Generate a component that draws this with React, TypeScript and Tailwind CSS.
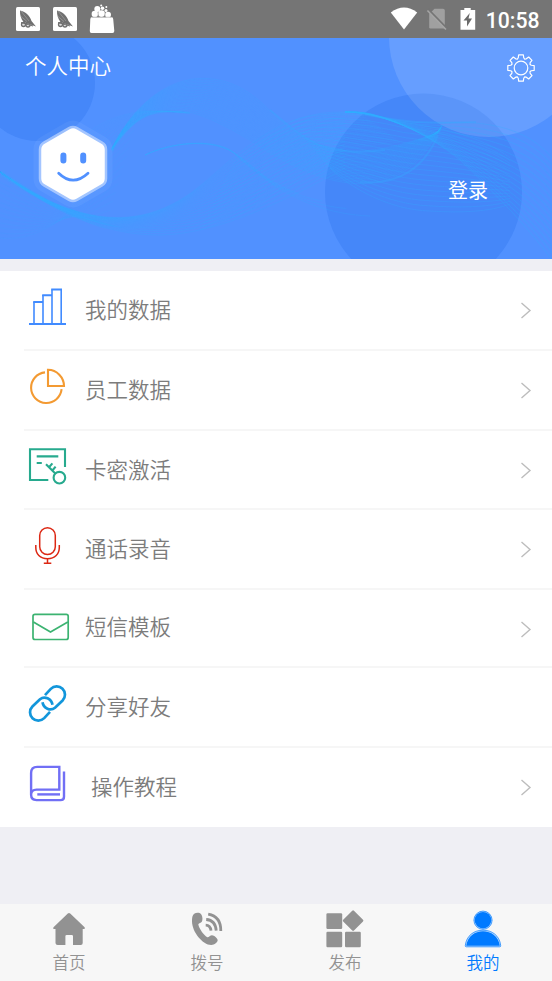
import type { ReactNode } from "react"

type MenuItem = {
    label: string
    icon: ReactNode
    row: string
    textClass?: string
    arrow?: boolean
}

type TabItem = {
    label: string
    icon: ReactNode
    active?: boolean
}

const waves = [
    {
        from: [0, 134, 60, 175, 130, 205, 200, 148, 240, 115, 280, 72, 345, 74],
        to: [0, 134, 50, 172, 100, 197, 160, 197, 220, 196, 290, 160, 345, 130],
        count: 20,
        opacity: 0.2,
    },
    {
        from: [0, 134, 30, 150, 50, 166, 75, 178, 85, 183, 95, 188, 105, 190],
        to: [0, 200, 20, 202, 40, 196, 60, 182, 80, 165, 90, 120, 140, 74],
        count: 14,
        opacity: 0.1,
    },
    {
        from: [112, 110, 150, 35, 215, 20, 265, 68, 310, 112, 340, 130, 440, 94],
        to: [112, 112, 150, 50, 195, 70, 250, 102, 320, 150, 400, 175, 442, 87],
        count: 22,
        opacity: 0.2,
    },
    {
        from: [80, 100, 100, 85, 120, 74, 150, 73, 160, 73, 170, 73, 180, 74],
        to: [112, 112, 120, 95, 140, 78, 160, 74, 170, 73, 180, 74, 190, 75],
        count: 10,
        opacity: 0.1,
    },
    {
        from: [145, 117, 170, 105, 215, 98, 240, 119, 250, 126, 262, 136, 275, 148],
        to: [145, 117, 170, 105, 210, 100, 230, 112, 245, 124, 290, 175, 370, 178],
        count: 5,
        opacity: 0.18,
    },
    {
        from: [345, 74, 380, 72, 380, 86, 440, 85, 460, 84, 520, 80, 552, 120],
        to: [345, 74, 380, 75, 420, 90, 460, 122, 500, 160, 530, 192, 552, 222],
        count: 16,
        opacity: 0.28,
    },
    {
        from: [290, 84, 320, 72, 360, 74, 400, 84, 430, 88, 480, 96, 510, 120],
        to: [330, 130, 350, 150, 390, 172, 430, 173, 460, 175, 490, 174, 510, 166],
        count: 18,
        opacity: 0.25,
    },
    {
        from: [235, 122, 265, 100, 290, 84, 330, 76, 340, 74, 350, 74, 360, 75],
        to: [200, 192, 250, 176, 290, 150, 330, 118, 350, 108, 370, 108, 400, 104],
        count: 20,
        opacity: 0.14,
    },
]

const ridges = [
    "M112 113C135 74 155 70 190 75",
    "M270 72C310 106 325 119 385 112",
    "M355 74C400 84 420 86 476 84",
    "M360 144C400 148 425 128 438 97",
]

function curve(p: number[]) {
    return `M${p[0]} ${p[1]}C${p.slice(2, 8).join(" ")} ${p.slice(8).join(" ")}`
}

function between(a: number[], b: number[], t: number) {
    return a.map((v, i) => v + (b[i] - v) * t)
}

function HeaderBackground() {
    return (
        <svg className="absolute inset-0" width="552" height="221" viewBox="0 0 552 221" fill="none">
            <circle cx="37" cy="45" r="58" fill="#4587f9" />
            <circle cx="423.5" cy="154" r="98.5" fill="#4587f9" />
            <circle cx="489" cy="-1" r="100" fill="#fff" fillOpacity="0.12" />
            {waves.map((w, i) => (
                <g key={i} stroke="#2fb0ff" strokeOpacity={w.opacity} strokeWidth="1">
                    {Array.from({ length: w.count }, (_, n) => (
                        <path key={n} d={curve(between(w.from, w.to, n / (w.count - 1)))} />
                    ))}
                </g>
            ))}
            {ridges.map(d => (
                <path key={d} d={d} stroke="#35a8ff" strokeOpacity="0.35" strokeWidth="2" />
            ))}
            <path d="M1 132C40 160 80 182 125 190C85 186 40 164 1 138Z" fill="#35a8ff" fillOpacity="0.4" />
        </svg>
    )
}

function Avatar() {
    const hex = "M36 9.1L61 23.5V52.5L36 66.9L11 52.5V23.5Z"
    return (
        <svg className="overflow-visible" width="72" height="76" viewBox="0 0 72 76" strokeLinejoin="round" strokeLinecap="round">
            <path d={hex} fill="none" stroke="#fff" strokeOpacity="0.05" strokeWidth="29" />
            <path d={hex} fill="none" stroke="#fff" strokeOpacity="0.45" strokeWidth="18.5" />
            <path d={hex} fill="#fff" stroke="#fff" strokeWidth="13.5" />
            <path d="M26.4 29.4V34.6M46.2 29.4V34.6" stroke="#5191ff" strokeWidth="6" />
            <path d="M21.7 47.2Q36 61.1 51 47.2" fill="none" stroke="#5191ff" strokeWidth="2.8" />
        </svg>
    )
}

function Gear() {
    const points: string[] = []
    for (let i = 0; i < 8; i++) {
        for (const [offset, radius] of [[-22.5, 9.7], [-15, 10.6], [-10, 13.4], [10, 13.4], [15, 10.6]]) {
            const a = ((i * 45 + offset) * Math.PI) / 180
            points.push(`${(15 + radius * Math.cos(a)).toFixed(2)} ${(15 + radius * Math.sin(a)).toFixed(2)}`)
        }
    }
    return (
        <svg width="30" height="30" viewBox="0 0 30 30" fill="none" stroke="#fff" strokeWidth="1.2" strokeLinejoin="round">
            <path d={`M${points.join("L")}Z`} />
            <circle cx="15" cy="15" r="6.8" />
        </svg>
    )
}

function AppBadge() {
    return (
        <svg width="24" height="24" viewBox="0 0 24 24">
            <rect width="24" height="24" rx="1.5" fill="#fff" />
            <path d="M4 3.5C9 4.5 14 8.5 15.5 14L20 19.5L13 17L7.5 15C5 12 3.8 8 4 3.5Z" fill="#707070" />
            <path d="M5 4L13 14M4.5 9L11 14.5" stroke="#c4c4c4" strokeWidth="0.4" />
            <g fill="#ddd" stroke="#707070" strokeWidth="1.3">
                <circle cx="7.5" cy="17.5" r="2" />
                <circle cx="12" cy="18" r="2" />
            </g>
            <path d="M5 15.5L17 19" stroke="#707070" strokeWidth="1" />
        </svg>
    )
}

function StatusBar() {
    return (
        <div className="flex h-[38px] items-center bg-[#757575] pl-[15.5px] pr-3">
            <AppBadge />
            <div className="w-[13px]" />
            <AppBadge />
            <svg className="ml-3" width="26" height="30" viewBox="0 0 26 30" fill="#fff">
                <path d="M2 13.2H23Q24 13.2 24.2 15L25.3 27Q25.3 29 23.5 29H2.5Q.7 29 .8 27L1.3 15Z" />
                <circle cx="5.8" cy="10" r="3.2" />
                <circle cx="12.5" cy="9.6" r="3.4" />
                <circle cx="19" cy="10.8" r="3" />
                <circle cx="8.3" cy="4.9" r="3" />
                <circle cx="13.5" cy="4.2" r="1.8" />
                <circle cx="17" cy="6.6" r="1.5" />
                <circle cx="12.2" cy="1.5" r="1" />
                <circle cx="17.3" cy="3" r="1" />
                <path d="M2.5 13.2H22.5M9.2 8.5V13.2M16 9V13.2" stroke="#9a9a9a" strokeWidth="0.5" />
            </svg>
            <svg className="ml-auto" width="28" height="24" viewBox="0 0 28 24">
                <path d="M.8 5.4Q14-4.3 27.2 5.4L14 22.4Z" fill="#fff" />
            </svg>
            <svg className="ml-2" width="22" height="24" viewBox="0 0 22 24">
                <path d="M8.5 1.8H17Q18.8 1.8 18.8 3.5V21.5H4.5Q3.2 21.5 3.2 20.3V7Z" fill="#a0a0a0" />
                <path d="M2.4 2.5L21 21.5" stroke="#757575" strokeWidth="1.8" />
                <path d="M1.4 3.5L20 22.5" stroke="#a5a5a5" strokeWidth="1.6" />
            </svg>
            <svg className="ml-[12px]" width="16" height="24" viewBox="0 0 16 24">
                <path d="M4.3 1H10.7V3H15.2V22.8H.5V3H4.3Z" fill="#fff" />
                <path d="M9.8 6L3.5 13.6H7V19.5L12 11.5H8.5Z" fill="#6a6a6a" />
            </svg>
            <span className="ml-[10px] mr-[0.5px] mt-[3px] font-['Roboto'] text-[21.2px] leading-none font-medium text-white">10:58</span>
        </div>
    )
}

const menu: MenuItem[] = [
    {
        label: "我的数据",
        row: "h-20",
        arrow: true,
        icon: (
            <g stroke="#418bff">
                <path d="M6 36V15M15 8V36M24 2.5V36M33.2 2.5V36" strokeWidth="1.6" />
                <path d="M5.2 14.9H15M14.2 8.2H24M23.2 2.4H34M1 37H38" strokeWidth="2" />
            </g>
        ),
    },
    {
        label: "员工数据",
        row: "h-20",
        arrow: true,
        icon: (
            <g stroke="#f39a32" strokeWidth="2.1">
                <path d="M17 5.4A15.3 15.3 0 1 0 33.6 22.2" />
                <path d="M20 2.8V19H36A16.3 16.3 0 0 0 20 2.8Z" />
            </g>
        ),
    },
    {
        label: "卡密激活",
        row: "h-[79px]",
        arrow: true,
        icon: (
            <g stroke="#27aa8e" strokeWidth="2.1">
                <path d="M20.3 33H2V2.3H37V20" />
                <path d="M8.7 9.4H30.3M8.7 16H13.8" />
                <circle cx="31.4" cy="30.7" r="5.8" />
                <path d="M27.3 26.6L18 17.3M21 20.3L24.4 16.4M24.4 23.5L27.6 19.6" />
            </g>
        ),
    },
    {
        label: "通话录音",
        row: "h-20",
        arrow: true,
        icon: (
            <g stroke="#dc2713" strokeWidth="1.5">
                <rect x="11.7" y="1.7" width="15.6" height="26.8" rx="7.8" />
                <path d="M7.8 19V21.5C7.8 28 12 32.7 19.5 32.7S31.3 28 31.3 21.5V19M19.5 32.7V37M15.8 37.2H23.3" />
            </g>
        ),
    },
    {
        label: "短信模板",
        row: "h-[78px]",
        textClass: "-mt-[2.5px]",
        arrow: true,
        icon: (
            <g stroke="#3cb371" strokeWidth="1.7">
                <rect x="5" y="8.3" width="35.2" height="25.2" rx="2" />
                <path d="M5.4 16L22.5 26L39.8 16" />
            </g>
        ),
    },
    {
        label: "分享好友",
        row: "h-20",
        icon: (
            <g stroke="#1296db" strokeWidth="2.7">
                <path d="M17 11.2L22.8 4.9A8.2 8.2 0 0 1 34.6 16.5L27 23.8C22.5 27.5 15.5 24.5 14.5 18.2" />
                <path d="M22 27.8L16.2 34.1A8.2 8.2 0 0 1 4.4 22.5L12 15.2C16.5 11.5 23.5 14.5 24.5 20.8" />
            </g>
        ),
    },
    {
        label: "操作教程",
        row: "h-[79px]",
        textClass: "pl-1.5",
        arrow: true,
        icon: (
            <g stroke="#716ff5" strokeWidth="2.4">
                <path d="M3.1 31V9Q3.1 2.9 9.2 2.9H31.3V25.6H8.5Q3.1 25.6 3.1 30.8T8.5 36.1H32.5Q36 36.1 36 32.7V7.4" />
                <path d="M9.3 30.4H32" />
            </g>
        ),
    },
]

const tabs: TabItem[] = [
    {
        label: "首页",
        icon: (
            <path d="M18.8 4.6Q20 3.4 21.2 4.6L35.6 18.2Q36.6 19.7 35 19.9H33.7V34Q33.7 36 31.7 36H24V27.3Q24 26 22.8 26H17.7Q16.4 26 16.4 27.3V36H8.7Q6.5 36 6.5 34V19.9H5Q3.4 19.7 4.5 18.2Z" />
        ),
    },
    {
        label: "拨号",
        icon: (
            <>
                <path d="M7.2 4.8C9 3.5 12.5 3.3 14 5C15.8 7.5 15.8 11 14.8 12.8C13.9 14 12 14.2 11.3 15.2C12 19.5 16.5 25.8 20.3 28.2C22 28.4 23 26.2 25 26.2C27.3 26.3 30.3 29 30.7 31C30.8 33.2 27.5 35.9 24.3 36C16 36.2 5.2 23.2 5 12.5C4.9 9 5.4 6.2 7.2 4.8Z" />
                <path d="M18.7 16.2Q23.3 16.3 24 21.6M19.2 10.5Q28.5 11.2 29.2 21.7M21.2 5.2Q34 7.5 33.8 22" fill="none" stroke="currentColor" strokeWidth="2.8" />
            </>
        ),
    },
    {
        label: "发布",
        icon: (
            <>
                <rect x="1.4" y="4.2" width="15.8" height="15.8" rx="1.2" />
                <rect x="1.4" y="22.8" width="15.8" height="15.4" rx="1.2" />
                <rect x="20" y="22.8" width="15.8" height="15.4" rx="1.2" />
                <rect x="20.5" y="4" width="15.2" height="15.2" rx="1.2" transform="rotate(45 28.1 11.6)" />
            </>
        ),
    },
    {
        label: "我的",
        active: true,
        icon: (
            <>
                <g stroke="currentColor" strokeWidth="0.7">
                    <path d="M2.3 36.4C3.5 26.5 11 21.2 20 21.2S36.5 26.5 37.7 36.4Q37.9 37.8 36.7 37.8H3.3Q2.1 37.8 2.3 36.4Z" fill="#b9dbff" />
                    <circle cx="20" cy="11.2" r="9.1" fill="#b9dbff" />
                </g>
                <path d="M3.2 36.8C4.5 27.3 12 22.2 20 22.2S35.5 27.3 36.8 36.8Z" />
                <circle cx="20" cy="11.2" r="8.3" />
            </>
        ),
    },
]

function MenuRow({ item, last }: { item: MenuItem; last: boolean }) {
    return (
        <div className={`flex pl-1 pt-4 ${item.row} ${last ? "" : "border-b-2 border-[#f6f6f6]"}`}>
            <svg className="shrink-0 overflow-visible" width="40" height="40" viewBox="0 0 40 40" fill="none">
                {item.icon}
            </svg>
            <span className={`ml-[17px] h-11 text-[21.5px] leading-11 font-[350] text-[#7c7c7c] ${item.textClass ?? ""}`}>
                {item.label}
            </span>
            {item.arrow && (
                <svg className="ml-auto mr-5 mt-[14px]" width="12" height="18" viewBox="0 0 12 18" fill="none" stroke="#bdbdbd" strokeWidth="1.4">
                    <path d="M1.5 2L10 9.5L1.5 17" />
                </svg>
            )}
        </div>
    )
}

export default function App() {
    return (
        <div className="flex h-[981px] w-[552px] flex-col overflow-hidden bg-[#efeff4] font-['Noto_Sans_CJK_SC',sans-serif]">
            <StatusBar />
            <header className="relative h-[221px] overflow-hidden bg-[#5191ff] text-white">
                <HeaderBackground />
                <div className="relative flex items-start justify-between pl-[25px] pr-4 pt-[15px]">
                    <h1 className="-mt-1 text-[21.5px] leading-8 font-[350]">个人中心</h1>
                    <Gear />
                </div>
                <div className="relative mt-[42.5px] flex items-start justify-between pl-[36.7px] pr-16">
                    <Avatar />
                    <span className="mt-[50.5px] text-[20px] leading-7">登录</span>
                </div>
            </header>
            <main className="mt-3 bg-white pl-6">
                {menu.map((item, i) => (
                    <MenuRow key={item.label} item={item} last={i === menu.length - 1} />
                ))}
            </main>
            <nav className="mt-auto flex h-[77px] bg-[#f7f7f7]">
                {tabs.map(tab => (
                    <div
                        key={tab.label}
                        className={`flex flex-1 flex-col items-center pt-[5px] ${tab.active ? "text-[#007aff]" : "text-[#929292]"}`}
                    >
                        <svg width="40" height="40" viewBox="0 0 40 40" fill="currentColor">
                            {tab.icon}
                        </svg>
                        <span className="mt-px text-[16.5px] leading-6 font-[350]">{tab.label}</span>
                    </div>
                ))}
            </nav>
        </div>
    )
}
